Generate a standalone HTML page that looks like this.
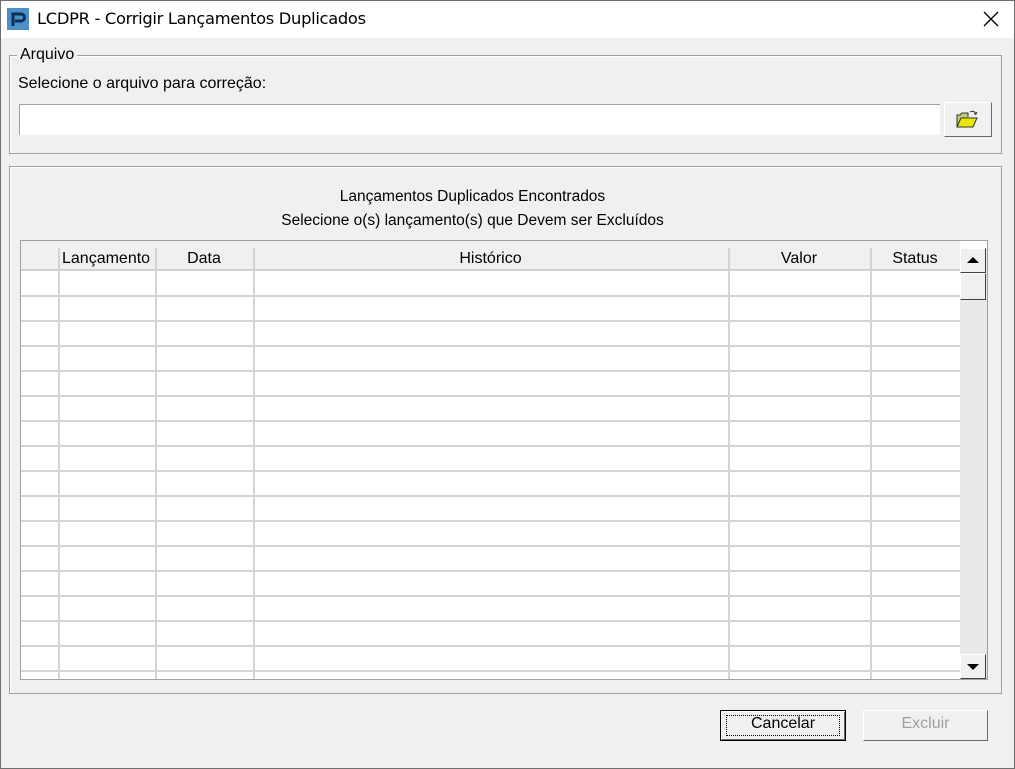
<!DOCTYPE html>
<html><head><style>
*{margin:0;padding:0;box-sizing:border-box}
body{width:1015px;height:769px;background:#f0f0f0;font-family:"Liberation Sans",sans-serif;font-size:16px;color:#000;position:relative;overflow:hidden}
.a{position:absolute}
.t{white-space:nowrap}
</style></head><body>
<div class="a" style="left:0;top:0;width:1015px;height:769px;border:1px solid #6e6e6e"></div>
<div class="a" style="left:1px;top:1px;width:1013px;height:37px;background:#fff"></div>
<div class="a" style="left:7px;top:8px;width:22px;height:22px;background:#4e8fc8"></div>
<svg class="a" style="left:7px;top:8px" width="22" height="22"><path d="M6 18V6h8a3.5 3.5 0 0 1 0 7H8" fill="none" stroke="#0b2f5a" stroke-width="3"/></svg>
<div class="a t" style="left:37px;top:9px;font-size:16.3px;font-family:'DejaVu Sans','Liberation Sans',sans-serif;letter-spacing:-0.3px">LCDPR - Corrigir Lançamentos Duplicados</div>
<svg class="a" style="left:983px;top:11px" width="16" height="16"><path d="M1 1L15 15M15 1L1 15" stroke="#000" stroke-width="1.3"/></svg>

<div class="a" style="left:9px;top:55px;width:993px;height:99px;border:1px solid #a0a0a0;box-shadow:1px 1px 0 #fff inset"></div>
<div class="a t" style="left:17px;top:46px;background:#f0f0f0;padding:0 3px">Arquivo</div>
<div class="a t" style="left:18px;top:75px">Selecione o arquivo para correção:</div>
<div class="a" style="left:19px;top:104px;width:921px;height:31px;background:#fff;border-top:1px solid #a0a0a0;border-left:1px solid #a0a0a0"></div>
<div class="a" style="left:944px;top:102px;width:48px;height:35px;border:1px solid;border-color:#fff #696969 #696969 #fff;background:#f0f0f0"></div>
<svg class="a" style="left:955px;top:108px" width="26" height="22"><path d="M2 18V7h3l2-2h6v4" fill="#c8c870" stroke="#333"/><path d="M2 19l4-9h16l-4 9z" fill="#e8e800" stroke="#333"/><path d="M15 4a4 4 0 0 1 6 2l1-2M21 6l-2 0" fill="none" stroke="#333"/></svg>

<div class="a" style="left:9px;top:166px;width:993px;height:528px;border:1px solid #a0a0a0;box-shadow:1px 1px 0 #fff inset"></div>
<div class="a t" style="left:0;width:945px;top:188px;text-align:center;font-size:15.5px">Lançamentos Duplicados Encontrados</div>
<div class="a t" style="left:0;width:945px;top:212px;text-align:center;font-size:15.5px">Selecione o(s) lançamento(s) que Devem ser Excluídos</div>

<div class="a" style="left:20px;top:240px;width:968px;height:440px;border:1px solid #a0a0a0;background:#fff"></div>
<div class="a" style="left:21px;top:241px;width:939px;height:30px;background:#f0f0f0;border-bottom:2px solid #d0d0d0"></div>
<div id="g"></div>
<div class="a t" style="left:62px;top:250px">Lançamento</div>
<div class="a t" style="left:155px;width:98px;top:250px;text-align:center">Data</div>
<div class="a t" style="left:253px;width:475px;top:250px;text-align:center">Histórico</div>
<div class="a t" style="left:728px;width:142px;top:250px;text-align:center">Valor</div>
<div class="a t" style="left:870px;width:90px;top:250px;text-align:center">Status</div>
<div class="a" style="left:960px;top:248px;width:27px;height:431px;background:#e8e8e8"></div>
<div class="a" style="left:960px;top:248px;width:26px;height:25px;background:#f0f0f0;border:1px solid;border-color:#fff #404040 #404040 #fff"></div>
<div class="a" style="left:967px;top:257px;width:0;height:0;border-left:6px solid transparent;border-right:6px solid transparent;border-bottom:6px solid #000"></div>
<div class="a" style="left:960px;top:273px;width:26px;height:27px;background:#f0f0f0;border:1px solid;border-color:#fff #404040 #404040 #fff"></div>
<div class="a" style="left:960px;top:654px;width:26px;height:25px;background:#f0f0f0;border:1px solid;border-color:#fff #404040 #404040 #fff"></div>
<div class="a" style="left:967px;top:664px;width:0;height:0;border-left:6px solid transparent;border-right:6px solid transparent;border-top:6px solid #000"></div>

<div class="a" style="left:720px;top:710px;width:126px;height:31px;border:1px solid #000;box-shadow:inset 1px 1px 0 #fff,inset -1px -1px 0 #696969"></div>
<div class="a" style="left:726px;top:715px;width:114px;height:21px;border:1px dotted #000"></div>
<div class="a t" style="left:720px;width:126px;top:715px;text-align:center">Cancelar</div>
<div class="a" style="left:863px;top:710px;width:125px;height:31px;border:1px solid;border-color:#fff #696969 #696969 #fff"></div>
<div class="a t" style="left:863px;width:125px;top:715px;text-align:center;color:#a0a0a0">Excluir</div>
<script>
var h='';
for(var y=295;y<=670;y+=25)h+='<div class="a" style="left:21px;top:'+y+'px;width:939px;height:2px;background:#d4d4d4"></div>';
[58,155,253,728,870].forEach(function(x){h+='<div class="a" style="left:'+x+'px;top:248px;width:2px;height:431px;background:#d4d4d4"></div>'});
document.getElementById('g').outerHTML=h;
</script>
</body></html>
